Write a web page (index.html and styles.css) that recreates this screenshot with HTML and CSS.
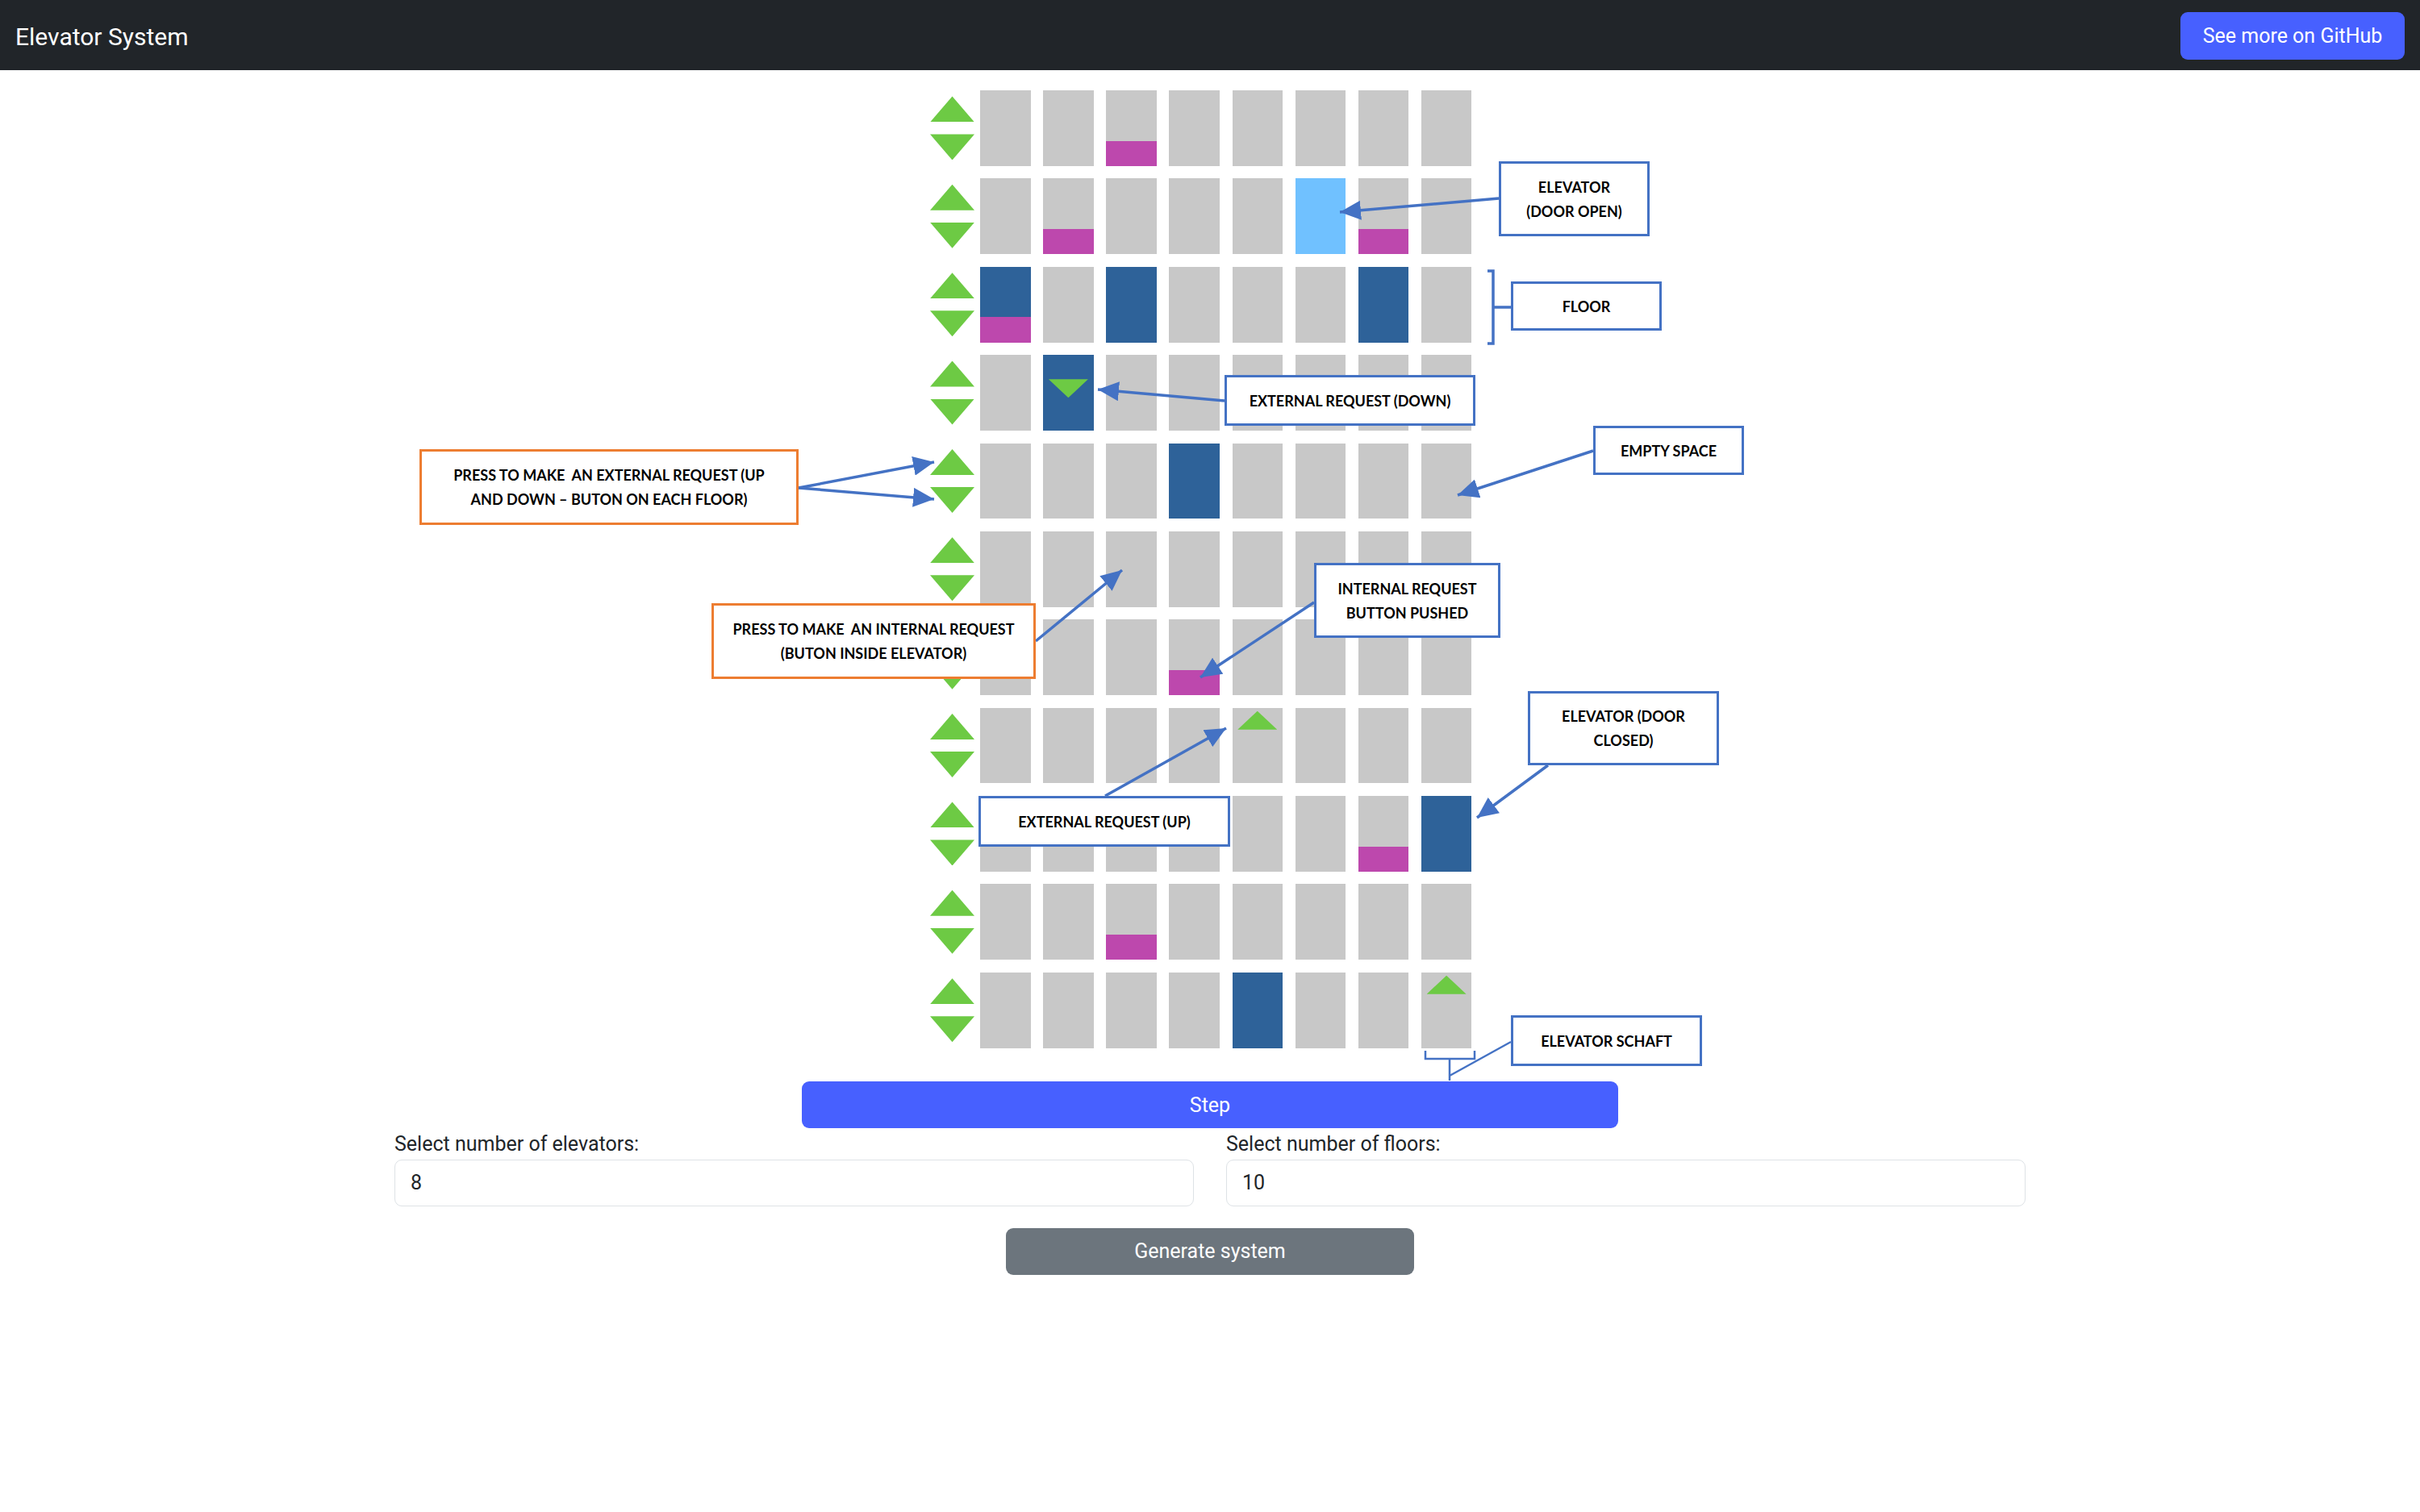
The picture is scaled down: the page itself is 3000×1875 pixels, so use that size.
FILE: index.html
```html
<!DOCTYPE html>
<html lang="en">
<head>
<meta charset="utf-8">
<title>Elevator System</title>
<link rel="stylesheet" href="styles.css">
</head>
<body>
<div class="page">
  <nav class="navbar">
    <span class="brand">Elevator System</span>
    <a class="btn btn-github" href="#">See more on GitHub</a>
  </nav>

  <main class="main">
    <div class="building">
      <div class="floor">
        <div class="calls"><span class="call-up"></span><span class="call-down"></span></div>
        <div class="shafts">
          <div class="cell"></div><div class="cell"></div><div class="cell"><span class="stop"></span></div><div class="cell"></div>
          <div class="cell"></div><div class="cell"></div><div class="cell"></div><div class="cell"></div>
        </div>
      </div>
      <div class="floor">
        <div class="calls"><span class="call-up"></span><span class="call-down"></span></div>
        <div class="shafts">
          <div class="cell"></div><div class="cell"><span class="stop"></span></div><div class="cell"></div><div class="cell"></div>
          <div class="cell"></div><div class="cell open"></div><div class="cell"><span class="stop"></span></div><div class="cell"></div>
        </div>
      </div>
      <div class="floor">
        <div class="calls"><span class="call-up"></span><span class="call-down"></span></div>
        <div class="shafts">
          <div class="cell car"><span class="stop"></span></div><div class="cell"></div><div class="cell car"></div><div class="cell"></div>
          <div class="cell"></div><div class="cell"></div><div class="cell car"></div><div class="cell"></div>
        </div>
      </div>
      <div class="floor">
        <div class="calls"><span class="call-up"></span><span class="call-down"></span></div>
        <div class="shafts">
          <div class="cell"></div><div class="cell car"><span class="req-down"></span></div><div class="cell"></div><div class="cell"></div>
          <div class="cell"></div><div class="cell"></div><div class="cell"></div><div class="cell"></div>
        </div>
      </div>
      <div class="floor">
        <div class="calls"><span class="call-up"></span><span class="call-down"></span></div>
        <div class="shafts">
          <div class="cell"></div><div class="cell"></div><div class="cell"></div><div class="cell car"></div>
          <div class="cell"></div><div class="cell"></div><div class="cell"></div><div class="cell"></div>
        </div>
      </div>
      <div class="floor">
        <div class="calls"><span class="call-up"></span><span class="call-down"></span></div>
        <div class="shafts">
          <div class="cell"></div><div class="cell"></div><div class="cell"></div><div class="cell"></div>
          <div class="cell"></div><div class="cell"></div><div class="cell"></div><div class="cell"></div>
        </div>
      </div>
      <div class="floor">
        <div class="calls"><span class="call-up"></span><span class="call-down"></span></div>
        <div class="shafts">
          <div class="cell"></div><div class="cell"></div><div class="cell"></div><div class="cell"><span class="stop"></span></div>
          <div class="cell"></div><div class="cell"></div><div class="cell"></div><div class="cell"></div>
        </div>
      </div>
      <div class="floor">
        <div class="calls"><span class="call-up"></span><span class="call-down"></span></div>
        <div class="shafts">
          <div class="cell"></div><div class="cell"></div><div class="cell"></div><div class="cell"></div>
          <div class="cell"><span class="req-up"></span></div><div class="cell"></div><div class="cell"></div><div class="cell"></div>
        </div>
      </div>
      <div class="floor">
        <div class="calls"><span class="call-up"></span><span class="call-down"></span></div>
        <div class="shafts">
          <div class="cell"></div><div class="cell"></div><div class="cell"></div><div class="cell"></div>
          <div class="cell"></div><div class="cell"></div><div class="cell"><span class="stop"></span></div><div class="cell car"></div>
        </div>
      </div>
      <div class="floor">
        <div class="calls"><span class="call-up"></span><span class="call-down"></span></div>
        <div class="shafts">
          <div class="cell"></div><div class="cell"></div><div class="cell"><span class="stop"></span></div><div class="cell"></div>
          <div class="cell"></div><div class="cell"></div><div class="cell"></div><div class="cell"></div>
        </div>
      </div>
      <div class="floor">
        <div class="calls"><span class="call-up"></span><span class="call-down"></span></div>
        <div class="shafts">
          <div class="cell"></div><div class="cell"></div><div class="cell"></div><div class="cell"></div>
          <div class="cell car"></div><div class="cell"></div><div class="cell"></div><div class="cell"><span class="req-up"></span></div>
        </div>
      </div>
    </div>

    <div class="controls">
      <button class="btn btn-step" type="button">Step</button>
      <div class="fields">
        <div class="field">
          <label class="label" for="elevators">Select number of elevators:</label>
          <input class="input" id="elevators" type="text" value="8">
        </div>
        <div class="field">
          <label class="label" for="floors">Select number of floors:</label>
          <input class="input" id="floors" type="text" value="10">
        </div>
      </div>
      <button class="btn btn-generate" type="button">Generate system</button>
    </div>
  </main>

  <svg class="arrows" width="3000" height="1875" viewBox="0 0 3000 1875">
    <defs>
      <marker id="head" markerUnits="userSpaceOnUse" markerWidth="28" markerHeight="24" refX="26" refY="12" orient="auto">
        <path d="M0 0 L26 12 L0 24 Z" fill="#4472c4"/>
      </marker>
    </defs>
    <g stroke="#4472c4" stroke-width="3.5" fill="none" marker-end="url(#head)">
      <line x1="1858" y1="246" x2="1661" y2="263"/>
      <line x1="1518" y1="497" x2="1361" y2="483"/>
      <line x1="1975" y1="559" x2="1807" y2="614"/>
      <line x1="1629" y1="747" x2="1488" y2="840"/>
      <line x1="990" y1="605" x2="1158" y2="573"/>
      <line x1="990" y1="605" x2="1158" y2="619"/>
      <line x1="1284" y1="795" x2="1391" y2="707"/>
      <line x1="1370" y1="987" x2="1520" y2="903"/>
      <line x1="1919" y1="949" x2="1831" y2="1014"/>
    </g>
    <g stroke="#4472c4" fill="none">
      <path d="M1844 336 H1851 V426 H1844 M1851 381 H1873" stroke-width="3.5"/>
      <path d="M1767 1303 V1313 H1828 V1303 M1797 1313 V1340 M1797 1334 L1873 1292" stroke-width="2.5"/>
    </g>
  </svg>

  <div class="note blue n-open">ELEVATOR<br>(DOOR OPEN)</div>
  <div class="note blue n-floor">FLOOR</div>
  <div class="note blue n-down">EXTERNAL REQUEST (DOWN)</div>
  <div class="note blue n-empty">EMPTY SPACE</div>
  <div class="note blue n-pushed">INTERNAL REQUEST<br>BUTTON PUSHED</div>
  <div class="note orange n-ext">PRESS TO MAKE&nbsp; AN EXTERNAL REQUEST (UP<br>AND DOWN – BUTON ON EACH FLOOR)</div>
  <div class="note orange n-int">PRESS TO MAKE&nbsp; AN INTERNAL REQUEST<br>(BUTON INSIDE ELEVATOR)</div>
  <div class="note blue n-up">EXTERNAL REQUEST (UP)</div>
  <div class="note blue n-closed">ELEVATOR (DOOR<br>CLOSED)</div>
  <div class="note blue n-schaft">ELEVATOR SCHAFT</div>
</div>
</body>
</html>
```

FILE: styles.css
```css
* { box-sizing: border-box; }

html, body {
  margin: 0;
  padding: 0;
  background: #ffffff;
}

body {
  font-family: Roboto, "Liberation Sans", Arial, sans-serif;
  color: #212529;
  font-size: 25px;
}

.page {
  position: relative;
  width: 3000px;
  min-height: 1875px;
}

/* Navbar */
.navbar {
  height: 87px;
  background: #212529;
  display: flex;
  align-items: center;
  justify-content: space-between;
  padding: 0 19px;
}

.brand {
  color: #ffffff;
  font-size: 30px;
  line-height: 1;
  padding-top: 4px;
}

.btn {
  display: inline-flex;
  align-items: center;
  justify-content: center;
  border: 0;
  border-radius: 9px;
  color: #ffffff;
  font-family: Roboto, "Liberation Sans", Arial, sans-serif;
  font-size: 25px;
  text-decoration: none;
  height: 59px;
  padding: 0;
}

.btn-github {
  background: #4760ff;
  width: 278px;
  margin-top: 1px;
}

/* Building */
.main {
  padding-top: 25px;
}

.building {
  width: 672px;
  margin-left: calc(50% - 347px);
  display: flex;
  flex-direction: column;
  gap: 15.625px;
}

.floor {
  display: flex;
  height: 93.75px;
}

.calls {
  width: 55px;
  margin-right: 7px;
  display: flex;
  flex-direction: column;
  justify-content: center;
  align-items: center;
  gap: 15px;
}

.call-up,
.call-down {
  display: block;
  width: 55px;
  height: 32px;
  background: #6dca44;
}

.call-up { clip-path: polygon(50% 0, 100% 100%, 0 100%); }
.call-down { clip-path: polygon(0 0, 100% 0, 50% 100%); }

.shafts {
  display: flex;
  gap: 15.625px;
}

.cell {
  width: 62.5px;
  height: 93.75px;
  background: #c8c8c8;
  display: flex;
  flex-direction: column;
  align-items: center;
}

.cell.car { background: #2e6299; }
.cell.open { background: #70c1ff; }

.stop {
  display: block;
  width: 100%;
  height: 31.25px;
  margin-top: auto;
  background: #bd48ad;
}

.req-up,
.req-down {
  display: block;
  width: 49px;
  height: 23px;
  background: #6dca44;
}

.req-up {
  margin-top: 4px;
  clip-path: polygon(50% 0, 100% 100%, 0 100%);
}

.req-down {
  margin-top: 30px;
  clip-path: polygon(0 0, 100% 0, 50% 100%);
}

/* Controls */
.controls {
  width: 2022px;
  margin: 41.5px auto 0;
  display: flex;
  flex-direction: column;
  align-items: center;
}

.btn-step {
  width: 1012px;
  height: 58px;
  background: #4760ff;
  margin-bottom: 1px;
}

.fields {
  width: 100%;
  display: grid;
  grid-template-columns: 1fr 1fr;
  column-gap: 40px;
}

.field {
  display: flex;
  flex-direction: column;
}

.label {
  font-size: 25px;
  line-height: 37.5px;
  color: #212529;
}

.input {
  height: 58px;
  border: 1px solid #dee2e6;
  border-radius: 9px;
  padding: 0 19px;
  font-family: Roboto, "Liberation Sans", Arial, sans-serif;
  font-size: 25px;
  color: #212529;
  background: #ffffff;
}

.btn-generate {
  width: 506px;
  height: 58px;
  margin-top: 27px;
  background: #6c757d;
}

/* Annotations */
.arrows {
  position: absolute;
  left: 0;
  top: 0;
  pointer-events: none;
}

.note {
  position: absolute;
  display: flex;
  align-items: center;
  justify-content: center;
  text-align: center;
  background: #ffffff;
  border: 3.5px solid #4472c4;
  font-family: Lato, "Open Sans", sans-serif;
  font-weight: 700;
  font-size: 18px;
  line-height: 30px;
  color: #000000;
  white-space: nowrap;
}

.note.orange { border-color: #ed7d31; }

.n-open   { left: 1858px; top: 200px;  width: 187px; height: 93px; }
.n-floor  { left: 1873px; top: 349px;  width: 187px; height: 61px; }
.n-down   { left: 1518px; top: 465px;  width: 311px; height: 63px; }
.n-empty  { left: 1975px; top: 528px;  width: 187px; height: 61px; }
.n-pushed { left: 1629px; top: 698px;  width: 231px; height: 93px; }
.n-ext    { left: 520px;  top: 557px;  width: 470px; height: 94px; }
.n-int    { left: 882px;  top: 748px;  width: 402px; height: 94px; }
.n-up     { left: 1213px; top: 987px;  width: 312px; height: 63px; }
.n-closed { left: 1894px; top: 857px;  width: 237px; height: 92px; }
.n-schaft { left: 1873px; top: 1259px; width: 237px; height: 63px; }
```
